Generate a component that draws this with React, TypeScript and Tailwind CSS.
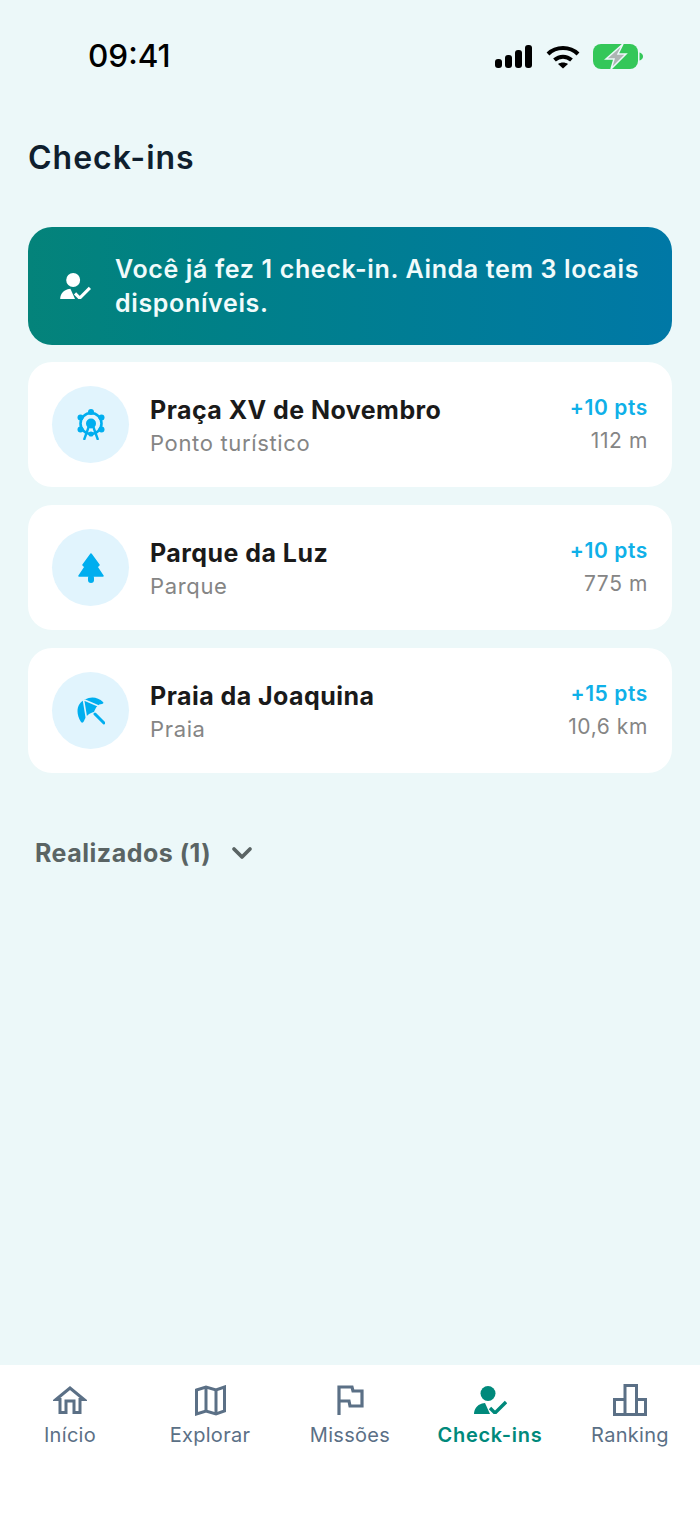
import { ChevronDown } from "lucide-react";

const places = [
  { name: "Praça XV de Novembro", kind: "Ponto turístico", pts: "+10 pts", dist: "112 m", icon: "wheel" },
  { name: "Parque da Luz", kind: "Parque", pts: "+10 pts", dist: "775 m", icon: "tree" },
  { name: "Praia da Joaquina", kind: "Praia", pts: "+15 pts", dist: "10,6 km", icon: "umbrella" },
];

const PersonCheck = ({ className }: { className: string }) => (
  <svg viewBox="0 0 33 28" className={className} fill="currentColor">
    <circle cx="14" cy="7.500" r="7.500" />
    <path d="M0 28C0 23 3 19 8 17.500L11 17l5 11z" />
    <path d="M16 22l5 5L32 16" fill="none" stroke="currentColor" strokeWidth="3.400" />
  </svg>
);

const PlaceIcon = ({ icon }: { icon: string }) => {
  if (icon === "wheel") {
    return (
      <svg viewBox="0 0 28 31" className="h-[31px] w-[28px] text-[#00aeef]" fill="currentColor">
        <circle cx="14" cy="14.500" r="10.500" fill="none" stroke="currentColor" strokeWidth="2.600" />
        <circle cx="14" cy="14.500" r="5" />
        <circle cx="14" cy="3" r="3" />
        <circle cx="3.500" cy="8.500" r="3" />
        <circle cx="24.500" cy="8.500" r="3" />
        <circle cx="3.500" cy="20.500" r="3" />
        <circle cx="24.500" cy="20.500" r="3" />
        <circle cx="14" cy="25" r="2.600" />
        <path d="M12 17L7 31M16 17l5 14" fill="none" stroke="currentColor" strokeWidth="2.400" />
      </svg>
    );
  }
  if (icon === "tree") {
    return (
      <svg viewBox="0 0 26 30" className="h-[30px] w-[26px] text-[#00aeef]" fill="currentColor">
        <path d="M13 1l8 11-2 2 6 9H1l6-9-2-2z" strokeLinejoin="round" stroke="currentColor" strokeWidth="1.500" />
        <rect x="10" y="22" width="6" height="8" rx="3" />
      </svg>
    );
  }
  return (
    <svg viewBox="0 0 28 28" className="h-[28px] w-[28px] text-[#00aeef]" fill="currentColor">
      <path d="M4 25C-2 16 0 6 8 2.500 14-1 21 0 26 5c1 1 0 2-1 2-4 0-6 3-8 8-5 1-8 4-10 9-1 2-2 2-3 1z" />
      <path d="M6.500 3L9.500 21.500M7.500 3l14 6" fill="none" stroke="#e1f4fd" strokeWidth="1.600" />
      <path d="M18 17L27 26" fill="none" stroke="currentColor" strokeWidth="3" strokeLinecap="round" />
    </svg>
  );
};

const navItems = [
  {
    label: "Início",
    icon: (
      <svg viewBox="0 0 34 28" className="h-[28px] w-[34px]" fill="none" stroke="currentColor" strokeWidth="3">
        <path d="M3 13.500L17 2l14 11.500h-4v13h-6V15h-8v11.500H7v-13z" />
      </svg>
    ),
  },
  {
    label: "Explorar",
    icon: (
      <svg viewBox="0 0 31 31" className="h-[31px] w-[31px]" fill="none" stroke="currentColor" strokeWidth="3">
        <path d="M1.500 5L11 2l10 3 8.500-3v24L21 29l-10-3-9.500 3z" />
        <path d="M11 2v24M21 5v24" />
      </svg>
    ),
  },
  {
    label: "Missões",
    icon: (
      <svg viewBox="0 0 27 30" className="h-[30px] w-[27px]" fill="none" stroke="currentColor" strokeWidth="3.200">
        <path d="M2 30V2h13l1 4h9v15H13l-1-5H2" />
      </svg>
    ),
  },
  { label: "Check-ins", active: true, icon: <PersonCheck className="h-[28px] w-[33px]" /> },
  {
    label: "Ranking",
    icon: (
      <svg viewBox="0 0 34 32" className="h-[32px] w-[34px]" fill="none" stroke="currentColor" strokeWidth="3">
        <path d="M1.500 30.500V15.500H12v15zM12 30.500V1.500h11.500v29zM23.500 30.500v-15h9v15z" />
      </svg>
    ),
  },
];

export default function App() {
  return (
    <div className="flex h-[1522px] w-[700px] flex-col bg-[#ecf8f9] font-['Inter',sans-serif]">
      <div className="flex h-[138px] items-start justify-between pl-[88px] pr-[57px] pt-[37px]">
        <span className="text-[31.500px] leading-[38px] font-medium text-black">09:41</span>
        <div className="mt-[7px] flex items-center gap-[14px]">
          <svg viewBox="0 0 37 23" className="h-[23px] w-[37px]" fill="black">
            <rect x="0" y="14" width="7" height="9" rx="3" />
            <rect x="10" y="10" width="7" height="13" rx="3" />
            <rect x="20" y="5" width="7" height="18" rx="3" />
            <rect x="30" y="0" width="7" height="23" rx="3" />
          </svg>
          <svg viewBox="0 0 34 24" className="h-[24px] w-[34px]" fill="none" stroke="black" strokeWidth="4">
            <path d="M2 9c8-8 22-8 30 0" />
            <path d="M8.500 15c5-4.500 12-4.500 17 0" />
            <path d="M17 23.500l-5-4.500c3-2 7-2 10 0z" fill="black" strokeWidth="0" />
          </svg>
          <svg viewBox="0 0 50 25" className="-ml-[1px] h-[25px] w-[50px]">
            <rect x="0" y="0" width="45" height="25" rx="8" fill="#34c759" />
            <path d="M46.500 8.500c2 .5 3.500 2 3.500 4s-1.500 3.500-3.500 4z" fill="#34c759" />
            <path d="M30 0L13 15h8l-3 10 15-15h-8l5-10z" fill="#aeb4b4" stroke="#ecf8f9" strokeWidth="1.500" />
          </svg>
        </div>
      </div>

      <h1 className="ml-[28px] text-[32px] leading-[40px] font-semibold tracking-[1px] text-[#0f1f2e]">Check-ins</h1>

      <div className="mx-[28px] mt-[49px] flex h-[118px] items-center gap-[24px] rounded-[24px] bg-gradient-to-r from-[#04837a] to-[#0078a6] pl-[32px] pr-[20px]">
        <PersonCheck className="h-[26px] w-[31px] shrink-0 text-white" />
        <p className="text-[25px] leading-[34px] font-semibold tracking-[0.65px] text-[#f1fbfb]">Você já fez 1 check-in. Ainda tem 3 locais disponíveis.</p>
      </div>

      <div className="mx-[28px] mt-[17px] flex flex-col gap-[18px]">
        {places.map((place) => (
          <div key={place.name} className="flex h-[125px] items-center rounded-[24px] bg-white px-[24px]">
            <div className="flex h-[77px] w-[77px] shrink-0 items-center justify-center rounded-full bg-[#e1f4fd]">
              <PlaceIcon icon={place.icon} />
            </div>
            <div className="ml-[21px] flex-1 pt-[2px]">
              <p className="text-[25px] leading-[34px] font-bold tracking-[0.45px] text-[#1a1a1a]">{place.name}</p>
              <p className="text-[22px] leading-[32px] tracking-[0.65px] text-[#858585]">{place.kind}</p>
            </div>
            <div className="text-right">
              <p className="-mt-[2px] text-[21px] leading-[34px] font-semibold tracking-[0.6px] text-[#0fb0e8]">{place.pts}</p>
              <p className="text-[21px] leading-[32px] tracking-[0.6px] text-[#858585]">{place.dist}</p>
            </div>
          </div>
        ))}
      </div>

      <div className="ml-[35px] mt-[62px] flex items-center gap-[15px] text-[#5a6464]">
        <span className="text-[25px] leading-[36px] font-bold tracking-[0.5px]">Realizados (1)</span>
        <ChevronDown className="h-[32px] w-[32px]" strokeWidth={2.8} />
      </div>

      <div className="mt-auto flex h-[157px] bg-white pt-[17px]">
        {navItems.map((item) => (
          <div key={item.label} className={`flex w-[140px] flex-col items-center ${item.active ? "text-[#00897b]" : "text-[#5b7086]"}`}>
            <div className="flex h-[36px] items-center justify-center">{item.icon}</div>
            <span className={`mt-[3px] text-[20px] leading-[28px] ${item.active ? "font-semibold tracking-[0.7px]" : "tracking-[0.3px]"}`}>{item.label}</span>
          </div>
        ))}
      </div>
    </div>
  );
}
